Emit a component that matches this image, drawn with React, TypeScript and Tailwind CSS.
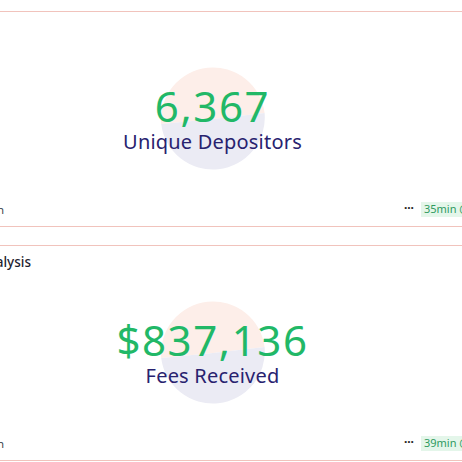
import React from "react";

function Pie() {
  return (
    <svg width="106" height="106" viewBox="0 0 106 106" className="absolute left-0 top-0">
      <path d="M53 53 L1.2 58 A52 52 0 0 1 104.6 47 Z" fill="#fdeee9" />
      <path d="M53 53 L104.6 47 A52 52 0 0 1 1.2 58 Z" fill="#ebebf4" />
    </svg>
  );
}

function Card({ title, value, label, left, time }: { title: string; value: string; label: string; left: string; time: string }) {
  const font = { fontFamily: "'Noto Sans', sans-serif" };
  return (
    <div className="relative -ml-[40px] w-[544px] h-[216px] border border-[#f1c3bc] flex flex-col bg-white">
      <div className="h-[33px] flex items-center">
        <div className="w-[70px] flex justify-end whitespace-nowrap text-[13.5px] font-medium text-[#1f2330] leading-none pt-[1px]" style={font}>
          <span>{title}</span>
        </div>
      </div>
      <div className="flex-1 flex">
        <div className="w-[503px] relative flex items-center justify-center">
          <div className="absolute left-[252px] top-1/2 -translate-x-1/2 -translate-y-1/2 w-[106px] h-[106px]">
            <Pie />
          </div>
          <div className="relative flex flex-col items-center" style={font}>
            <div className="text-[42px] leading-none text-[#21b867] tracking-[1.6px]">{value}</div>
            <div className="text-[20px] leading-none mt-[5px] text-[#28226f] tracking-[0.2px]">{label}</div>
          </div>
        </div>
      </div>
      <div className="h-[34px] flex items-center">
        <div className="w-[43px] flex justify-end whitespace-nowrap text-[11px] text-[#3a3f4a] leading-none" style={font}>
          <span>{left}</span>
        </div>
        <div className="flex-1" />
        <div className="text-[12px] font-bold text-[#222] leading-none mr-[7px] mb-[3px]">···</div>
        <div className="h-[15px] pl-[3px] pr-[3px] w-[80px] bg-[#e4f6ea] text-[#2f9a5e] text-[11px] flex items-center whitespace-nowrap mr-[2px]" style={font}>
          {time}
        </div>
      </div>
    </div>
  );
}

export default function App() {
  return (
    <div className="w-[462px] h-[462px] overflow-hidden bg-white">
      <div className="h-[11px]" />
      <Card title="" value="6,367" label="Unique Depositors" left="@rayn" time="35min @dune" />
      <div className="h-[18px]" />
      <Card title="Fees Analysis" value="$837,136" label="Fees Received" left="@rayn" time="39min @dune" />
    </div>
  );
}
